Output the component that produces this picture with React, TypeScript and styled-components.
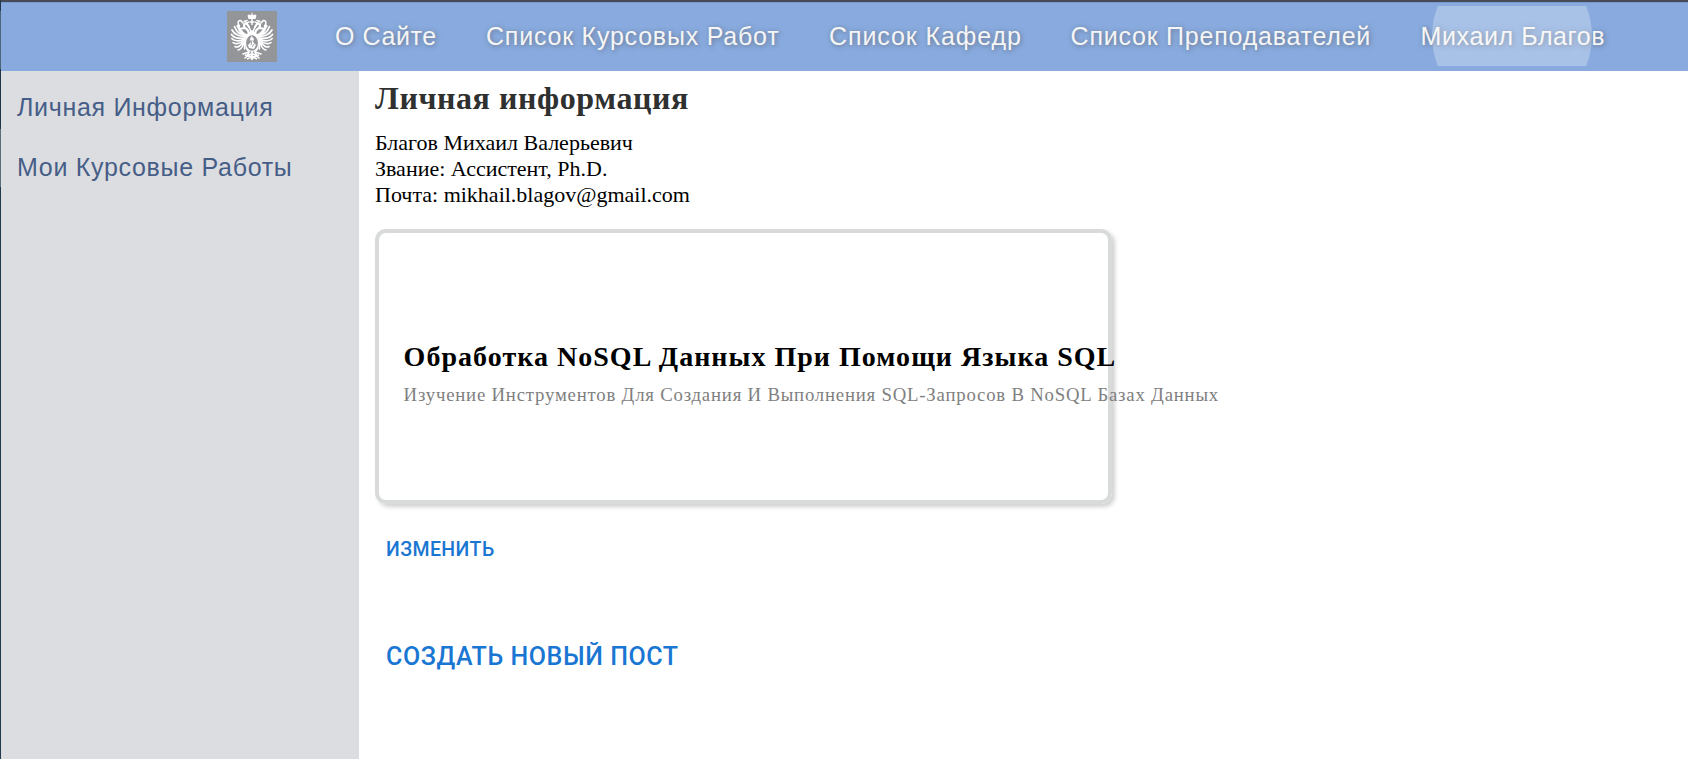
import React from 'react';
import styled, { createGlobalStyle } from 'styled-components';

const GlobalStyle = createGlobalStyle`
  * { box-sizing: border-box; }
  body { margin: 0; background: #fff; overflow: hidden; }
  h1, h2, p, ul { margin: 0; padding: 0; }
`;

const Page = styled.div`
  height: 759px;
  display: grid;
  grid-template-columns: 1px 1fr;
`;

const WindowEdge = styled.div`
  background: linear-gradient(
    #24394a 0 11px, #4d6578 11px 69px, #1f3647 69px 129px,
    #5b6d7a 129px 187px, #1f3a4a 187px
  );
`;

const Shell = styled.div`
  display: grid;
  grid-template-rows: 71px 1fr;
  min-width: 0;
`;

const Header = styled.header`
  display: flex;
  align-items: flex-start;
  padding: 3px 0 0 226px;
  border-top: 2px solid #484a57;
  background: #88aade;
  box-shadow: inset 0 1px 0 #7a9bcd;
`;

const Logo = styled.svg`
  flex: none;
  display: block;
  width: 50px;
  height: 51px;
  margin: 6px 58px 0 0;
`;

const Nav = styled.nav`
  display: grid;
  grid-template-columns: 151px 343px 241.6px 350px auto;
  margin-top: 1px;
`;

const NavLink = styled.a<{ $tracking: number }>`
  position: relative;
  height: 60px;
  font: 25px/60px 'Liberation Sans', Arial, sans-serif;
  letter-spacing: ${(p) => p.$tracking}px;
  color: #f5f5f5;
  text-shadow: 1px 1px 5px rgba(80, 80, 80, 0.6);
  white-space: nowrap;
`;

const Ripple = styled.span`
  position: absolute;
  inset: 0;
  overflow: hidden;

  &::after {
    content: '';
    position: absolute;
    left: 11px;
    top: -50px;
    width: 160px;
    height: 160px;
    border-radius: 50%;
    background: rgba(255, 255, 255, 0.27);
  }
`;

const Body = styled.div`
  display: grid;
  grid-template-columns: 358px 1fr;
`;

const Sidebar = styled.aside`
  display: flex;
  flex-direction: column;
  padding: 6px 16px;
  background: #dcdde1;
`;

const SideLink = styled.a<{ $tracking: number }>`
  font: 25px/60px 'Liberation Sans', Arial, sans-serif;
  letter-spacing: ${(p) => p.$tracking}px;
  color: #465d87;
  white-space: nowrap;
`;

const Main = styled.main`
  display: flex;
  flex-direction: column;
  align-items: flex-start;
  padding: 9px 0 0 16px;
  font-family: 'Liberation Serif', 'Times New Roman', serif;
`;

const Title = styled.h1`
  font-size: 32px;
  line-height: 37px;
  letter-spacing: 0.57px;
  color: #2f3030;
`;

const Details = styled.div`
  margin: 13px 0 21px;
  font-size: 22px;
  line-height: 26px;
  color: #000;
`;

const Card = styled.article`
  width: 737px;
  height: 275px;
  padding: 108px 0 0 24.6px;
  border: 4px solid #d9dada;
  border-radius: 11px;
  box-shadow: 3px 3px 4px rgba(0, 0, 0, 0.18);
  white-space: nowrap;
`;

const CardTitle = styled.h2`
  font-size: 28px;
  line-height: 32px;
  letter-spacing: 1.03px;
  color: #000;
`;

const CardText = styled.p`
  margin-top: 11px;
  font-size: 18.75px;
  line-height: 22px;
  letter-spacing: 0.797px;
  color: #808080;
`;

const TextButton = styled.button<{ $large?: boolean }>`
  margin-top: ${(p) => (p.$large ? 80 : 34)}px;
  padding: 0 11px;
  border: 0;
  background: none;
  font: 500 ${(p) => (p.$large ? '25px/30px' : '19.5px/24px')} Roboto, sans-serif;
  letter-spacing: ${(p) => (p.$large ? 0.57 : 0.42)}px;
  text-transform: uppercase;
  color: #1976d2;
`;

const Wing = () => (
  <g fill="none" stroke="#fff" strokeLinecap="round">
    <path d="M21 25C16 24 13 20 11 15" strokeWidth="3" />
    <path d="M20 25C13 24 9 20 7.500 15.500" strokeWidth="1.700" />
    <path d="M20 26C13 26 7 23 5 19" strokeWidth="1.700" />
    <path d="M19 27C13 28 7 27 4.500 23.500" strokeWidth="1.700" />
    <path d="M18 28C12 31 7 30 4.800 27.500" strokeWidth="1.600" />
    <path d="M17 29C13 33 8 33.500 6 31.500" strokeWidth="1.600" />
    <path d="M17 30C14 35 10 37 8 35.500" strokeWidth="1.600" />
    <path d="M17 32C15 37 13 39 11 39" strokeWidth="1.500" />
    <path d="M22 24C22 20 20 18 18 17L14.500 17.500M18 17C16 14 17 12 20 13L22 16" strokeWidth="2.200" />
    <path d="M12.500 15C10 12 11 9 14 9.500M14 10L16 12" strokeWidth="1.500" />
    <path d="M17 10.500L20 9.500M19 12L22 11" strokeWidth="1.500" />
    <path d="M17.500 27V38M15 33H18" strokeWidth="1.400" />
    <path d="M19 37L22 41L16 43M22 41L20 45M24 43C21 44 19 46 18 47" strokeWidth="1.600" />
  </g>
);

const Emblem = () => (
  <Logo viewBox="0 0 50 51" aria-label="Герб">
    <rect width="50" height="51" fill="#939598" />
    <Wing />
    <g transform="matrix(-1 0 0 1 50 0)"><Wing /></g>
    <path d="M20.500 4.500Q22.500 2.500 24 4.500L25 1L26 4.500Q27.500 2.500 29.500 4.500L28.500 8H21.500Z" fill="#fff" />
    <path d="M23 11H27M25 8V14M22 16L25 23L28 16" stroke="#fff" strokeWidth="1.500" fill="none" />
    <path d="M20 23L25 19L30 23L28 27H22Z" fill="#fff" />
    <ellipse cx="25" cy="32" rx="6.600" ry="8.400" fill="#939598" stroke="#fff" strokeWidth="1.300" />
    <path d="M24.500 25L27 28L26 31L29 34L27 38L22 37L21 34L24 31L23 28Z" fill="#fff" />
    <path d="M25 29L24 34M27 33L25 36" stroke="#939598" strokeWidth=".9" />
    <path d="M25 40V49M18 44Q25 47 32 44M20 48Q25 45 30 48" stroke="#fff" strokeWidth="1.700" fill="none" />
  </Logo>
);

const navItems = [
  { label: 'О Сайте', tracking: 0.6 },
  { label: 'Список Курсовых Работ', tracking: 0.78 },
  { label: 'Список Кафедр', tracking: 0.9 },
  { label: 'Список Преподавателей', tracking: 0.77 },
  { label: 'Михаил Благов', tracking: 0.6, active: true },
];

export default function App() {
  return (
    <>
      <GlobalStyle />
      <Page>
        <WindowEdge />
        <Shell>
          <Header>
            <Emblem />
            <Nav>
              {navItems.map((item) => (
                <NavLink key={item.label} $tracking={item.tracking}>
                  {item.label}
                  {item.active && <Ripple />}
                </NavLink>
              ))}
            </Nav>
          </Header>
          <Body>
            <Sidebar>
              <SideLink $tracking={0.69}>Личная Информация</SideLink>
              <SideLink $tracking={0.7}>Мои Курсовые Работы</SideLink>
            </Sidebar>
            <Main>
              <Title>Личная информация</Title>
              <Details>
                <p>Благов Михаил Валерьевич</p>
                <p>Звание: Ассистент, Ph.D.</p>
                <p>Почта: mikhail.blagov@gmail.com</p>
              </Details>
              <Card>
                <CardTitle>Обработка NoSQL Данных При Помощи Языка SQL</CardTitle>
                <CardText>Изучение Инструментов Для Создания И Выполнения SQL-Запросов В NoSQL Базах Данных</CardText>
              </Card>
              <TextButton>Изменить</TextButton>
              <TextButton $large>Создать новый пост</TextButton>
            </Main>
          </Body>
        </Shell>
      </Page>
    </>
  );
}
